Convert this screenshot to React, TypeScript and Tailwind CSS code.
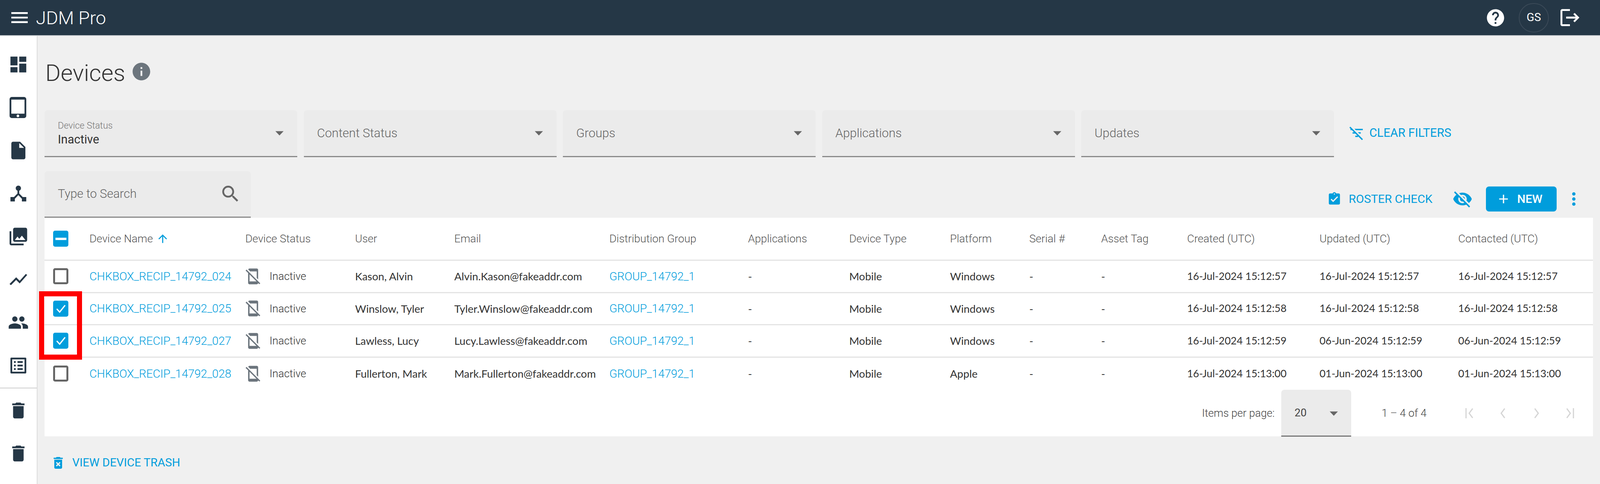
import React from "react";
import {
  MdMenu, MdDashboard, MdTabletMac, MdInsertDriveFile, MdDeviceHub, MdPhotoLibrary, MdShowChart, MdPeople, MdListAlt, MdDelete,
  MdInfo, MdHelp, MdLogout, MdSearch, MdArrowUpward, MdMobileOff, MdAssignmentTurnedIn, MdVisibilityOff, MdAdd, MdMoreVert,
  MdDeleteForever,
} from "react-icons/md";

const rows = [
  { id: "024", checked: false, user: "Kason, Alvin", email: "Alvin.Kason@fakeaddr.com", platform: "Windows", created: "16-Jul-2024 15:12:57", updated: "16-Jul-2024 15:12:57", contacted: "16-Jul-2024 15:12:57" },
  { id: "025", checked: true, user: "Winslow, Tyler", email: "Tyler.Winslow@fakeaddr.com", platform: "Windows", created: "16-Jul-2024 15:12:58", updated: "16-Jul-2024 15:12:58", contacted: "16-Jul-2024 15:12:58" },
  { id: "027", checked: true, user: "Lawless, Lucy", email: "Lucy.Lawless@fakeaddr.com", platform: "Windows", created: "16-Jul-2024 15:12:59", updated: "06-Jun-2024 15:12:59", contacted: "06-Jun-2024 15:12:59" },
  { id: "028", checked: false, user: "Fullerton, Mark", email: "Mark.Fullerton@fakeaddr.com", platform: "Apple", created: "16-Jul-2024 15:13:00", updated: "01-Jun-2024 15:13:00", contacted: "01-Jun-2024 15:13:00" },
];

const heads = ["Device Status", "User", "Email", "Distribution Group", "Applications", "Device Type", "Platform", "Serial #", "Asset Tag", "Created (UTC)", "Updated (UTC)", "Contacted (UTC)"];

const gridCols = "grid grid-cols-[115px_399px_281px_254px_397px_355px_259px_258px_203px_184px_220px_339px_355px_345px] items-center";

const Caret = ({ className = "" }: { className?: string }) => (
  <svg viewBox="0 0 23 12" className={`w-[21px] h-[12px] fill-[#666666] ${className}`}><path d="M0 0h23L11.5 12z" /></svg>
);

const Side = ({ icon: I }: { icon: React.ComponentType<{ size?: number; className?: string }> }) => (
  <div className="h-[110px] flex items-center justify-center"><I size={54} className="text-[#253746]" /></div>
);

const Filter = ({ label, value }: { label: string; value?: string }) => (
  <div className="w-[647px] h-[120px] bg-[#ebebeb] rounded-t-[8px] border-b-[3px] border-[#8a8a8a] pl-[34px] pr-[35px] flex items-center justify-between">
    {value ? (
      <div className="flex flex-col pt-[2px]">
        <span className="text-[23.5px] leading-[30px] text-[#777777] font-light">{label}</span>
        <span className="text-[30.5px] leading-[42px] text-[#333333]">{value}</span>
      </div>
    ) : (
      <span className="text-[31.5px] text-[#666666] font-light">{label}</span>
    )}
    <Caret />
  </div>
);

const Check = ({ state }: { state: "on" | "off" | "mixed" }) => {
  if (state === "off") return <div className="w-[39px] h-[41px] rounded-[5px] border-[5px] border-[#666666] bg-white" />;
  return (
    <div className="w-[39px] h-[41px] rounded-[5px] bg-[#009ddc] flex items-center justify-center">
      {state === "on" ? (
        <svg viewBox="0 0 42 41" className="w-[39px] h-[41px]"><path d="M10 21l8 9 15-19" fill="none" stroke="#ffffff" strokeWidth="3.5" /></svg>
      ) : (
        <div className="w-[28px] h-[6px] bg-white" />
      )}
    </div>
  );
};

const Page = ({ d }: { d: string }) => (
  <div className="w-[85px] flex justify-center">
    <svg viewBox="0 0 30 30" className="w-[30px] h-[30px]"><path d={d} fill="none" stroke="#d5d5d5" strokeWidth="3" /></svg>
  </div>
);

export default function App() {
  return (
    <div className="relative w-full h-[1238px] overflow-hidden flex flex-col bg-[#f0f0f0] font-[Roboto,sans-serif]">
      <header className="h-[92px] shrink-0 bg-[#253746] border-b-[2px] border-[#c9cdd1] flex items-center justify-between pl-[22px] pr-[48px]">
        <div className="flex items-center gap-[14px]">
          <MdMenu size={56} className="text-white" />
          <span className="text-[47px] leading-none font-light text-white">JDM Pro</span>
        </div>
        <div className="flex items-center">
          <MdHelp size={53} className="text-white" />
          <div className="ml-[33px] w-[77px] h-[75px] rounded-full border-[2px] border-[#3b4a58] flex items-center justify-center text-[29px] text-white">GS</div>
          <MdLogout size={58} className="ml-[25px] text-white" />
        </div>
      </header>

      <div className="flex flex-1 min-h-0">
        <aside className="w-[96px] shrink-0 bg-white border-r-[2px] border-[#dcdcdc] pt-[18px]">
          <Side icon={MdDashboard} />
          <Side icon={MdTabletMac} />
          <Side icon={MdInsertDriveFile} />
          <Side icon={MdDeviceHub} />
          <Side icon={MdPhotoLibrary} />
          <Side icon={MdShowChart} />
          <Side icon={MdPeople} />
          <Side icon={MdListAlt} />
          <div className="h-[3px] my-[1px] bg-[#dcdcdc]" />
          <Side icon={MdDelete} />
          <Side icon={MdDelete} />
        </aside>

        <main className="flex-1 min-w-0 px-[18px]">
          <div className="h-[190px] flex items-center pl-[2px]">
            <h1 className="text-[60px] leading-none font-light text-[#333333]">Devices</h1>
            <MdInfo size={54} className="ml-[14px] mb-[8px] text-[#6c757d]" />
          </div>

          <div className="flex items-center gap-[16.5px]">
            <Filter label="Device Status" value="Inactive" />
            <Filter label="Content Status" />
            <Filter label="Groups" />
            <Filter label="Applications" />
            <Filter label="Updates" />
            <div className="ml-[20px] flex items-center gap-[12px] text-[#009ddc] mb-[4px]">
              <svg viewBox="0 0 24 24" className="w-[42px] h-[42px] fill-[#009ddc]"><path d="M10.83 8H21V6H8.83l2 2zm5 5H18v-2h-4.17l2 2zM14 16.83V18h-4v-2h3.17l-3-3H6v-2h2.17l-3-3H3V6h.17L1.39 4.22 2.8 2.81l18.38 18.38-1.41 1.41L14 16.83z" /></svg>
              <span className="text-[30.5px] font-normal leading-none">CLEAR FILTERS</span>
            </div>
          </div>

          <div className="mt-[36px] h-[119px] flex justify-between items-start">
            <div className="w-[528px] h-[119px] bg-[#ebebeb] rounded-t-[8px] border-b-[3px] border-[#8a8a8a] pl-[34px] pr-[24px] flex items-center justify-between">
              <span className="text-[31px] text-[#666666] font-light">Type to Search</span>
              <MdSearch size={56} className="text-[#666666]" />
            </div>
            <div className="flex items-center mt-[39px] pr-[23px]">
              <MdAssignmentTurnedIn size={38} className="text-[#009ddc]" />
              <span className="ml-[18px] text-[30px] font-normal leading-none text-[#009ddc]">ROSTER CHECK</span>
              <MdVisibilityOff size={52} className="ml-[51px] text-[#009ddc]" />
              <div className="ml-[34px] w-[181px] h-[64px] rounded-[8px] bg-[#009ddc] flex items-center pl-[26px] text-white">
                <MdAdd size={38} />
                <span className="ml-[16px] text-[30px] font-medium leading-none">NEW</span>
              </div>
              <MdMoreVert size={52} className="ml-[18px] text-[#009ddc]" />
            </div>
          </div>

          <section className="w-full h-[559px] bg-white">
            <div className={`${gridCols} h-[110px] border-b-[3px] border-[#e4e4e4] text-[28px] font-light text-[#555555]`}>
              <div className="pl-[22px]"><Check state="mixed" /></div>
              <div className="flex items-center gap-[9px]">
                <span>Device Name</span>
                <MdArrowUpward size={33} className="text-[#009ddc]" />
              </div>
              {heads.map((h) => <div key={h}>{h}</div>)}
            </div>
            {rows.map((r, i) => (
              <div key={r.id} className={`${gridCols} h-[82.5px] text-[27.5px] text-[#333333] font-[Lato,sans-serif] ${i < 3 ? "border-b-[3px] border-[#e4e4e4]" : ""}`}>
                <div className="pl-[22px]"><Check state={r.checked ? "on" : "off"} /></div>
                <div className="font-[Roboto,sans-serif] font-light text-[29.4px] text-[#009ddc]">CHKBOX_RECIP_14792_{r.id}</div>
                <div className="flex items-center">
                  <MdMobileOff size={44} className="text-[#6c757d] -ml-[2px]" />
                  <span className="ml-[20px] font-[Roboto,sans-serif] font-light">Inactive</span>
                </div>
                <div>{r.user}</div>
                <div>{r.email}</div>
                <div className="font-[Roboto,sans-serif] font-light text-[29.4px] text-[#009ddc]">GROUP_14792_1</div>
                <div>-</div>
                <div>Mobile</div>
                <div>{r.platform}</div>
                <div>-</div>
                <div>-</div>
                <div className="text-[26.5px]">{r.created}</div>
                <div className="text-[26.5px]">{r.updated}</div>
                <div className="text-[26.5px]">{r.contacted}</div>
              </div>
            ))}
            <div className="h-[119.5px] flex items-stretch justify-end pr-[18px] text-[27.5px] font-light text-[#444444]">
              <span className="self-center">Items per page:</span>
              <div className="ml-[17px] w-[179px] bg-[#ebebeb] rounded-t-[8px] border-b-[3px] border-[#777777] pl-[34px] pr-[34px] flex items-center justify-between">
                <span className="font-normal">20</span>
                <Caret className="mt-[6px]" />
              </div>
              <span className="self-center ml-[78px] w-[183px]">1 – 4 of 4</span>
              <div className="self-center flex items-center">
                <Page d="M5 2v26M22 3L13 15l9 12" />
                <Page d="M19 3L10 15l9 12" />
                <Page d="M11 3l9 12-9 12" />
                <Page d="M8 3l9 12-9 12M25 2v26" />
              </div>
            </div>
          </section>

          <div className="mt-[48px] pl-[15px] flex items-center gap-[16px] text-[#009ddc]">
            <MdDeleteForever size={40} />
            <span className="text-[29.5px] font-normal leading-none">VIEW DEVICE TRASH</span>
          </div>
        </main>
      </div>

      <div className="absolute left-[100px] top-[745px] w-[110px] h-[175px] border-x-[13px] border-y-[13px] border-[#ff0000]" />
    </div>
  );
}
